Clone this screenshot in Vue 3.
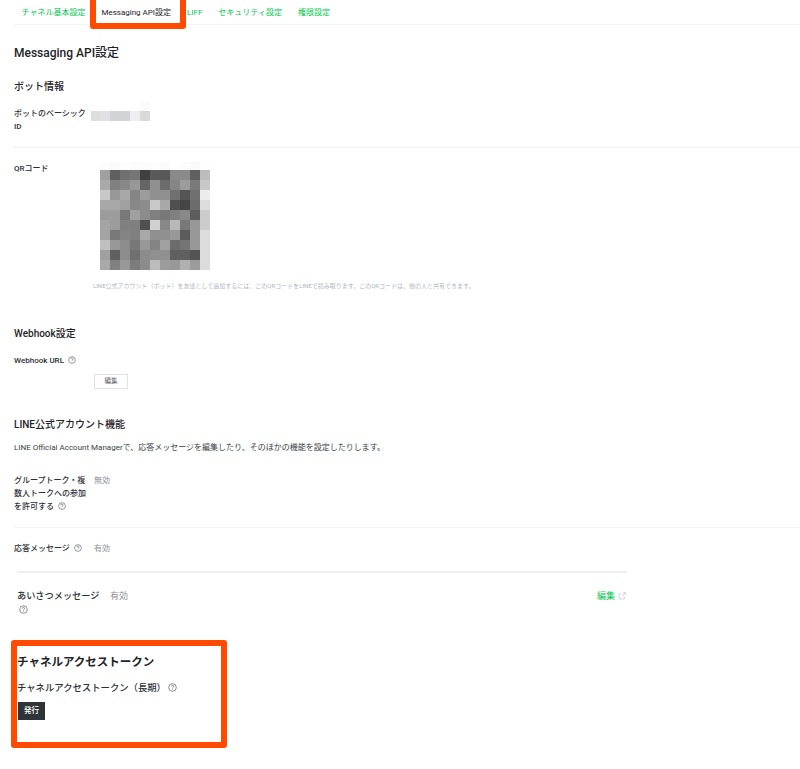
<script setup>
const tabs = ['チャネル基本設定', 'Messaging API設定', 'LIFF', 'セキュリティ設定', '権限設定']

const qrRows = [
  ['fdfdfd','fbfbfb','fdfdfd','fbfbfb','fcfcfc','fdfdfd','fbfbfb','ffffff','fcfcfc','fafafa','fefefe'],
  ['a0a0a0','5f5f5f','707070','757575','404040','5a5a5a','585858','8a8a8a','8a8a8a','606060','bcbcbc'],
  ['aaaaaa','808080','888888','989898','656565','909090','6c6c6c','858585','9c9c9c','7a7a7a','c8c8c8'],
  ['c8c8c8','989898','a8a8a8','858585','9c9c9c','909090','909090','707070','555555','707070','ececec'],
  ['a8a8a8','a8a8a8','a0a0a0','888888','8c8c8c','c8c8c8','a8a8a8','505050','454545','6c6c6c','dcdcdc'],
  ['9c9c9c','9c9c9c','787878','a0a0a0','8c8c8c','808080','787878','808080','888888','5c5c5c','cccccc'],
  ['a4a4a4','9c9c9c','808080','808080','505050','d0d0d0','888888','b8b8b8','787878','989898','cccccc'],
  ['a4a4a4','787878','848484','808080','a8a8a8','909090','909090','989898','5c5c5c','989898','dcdcdc'],
  ['c0c0c0','989898','8c8c8c','787878','989898','848484','a0a0a0','6c6c6c','747474','989898','dcdcdc'],
  ['a0a0a0','606060','8c8c8c','707070','8c8c8c','909090','909090','606060','606060','545454','dcdcdc'],
  ['a8a8a8','808080','989898','7c7c7c','8c8c8c','bcbcbc','9c9c9c','989898','b0b0b0','9c9c9c','dcdcdc'],
]
const qrCells = qrRows.flat().map((c) => '#' + c)

const idCells = [
  { w: 9, c: '#dddddd' },
  { w: 10, c: '#e1e1e2' },
  { w: 20, c: '#d1d3d6' },
  { w: 10, c: '#eeeeee' },
  { w: 10, c: '#d9d9da' },
]
</script>

<template>
  <div class="page">
    <nav class="tabs">
      <span v-for="(t, i) in tabs" :key="t" class="tab" :class="{ active: i === 1 }">{{ t }}</span>
    </nav>

    <main class="content">
      <h1 class="title">Messaging API設定</h1>

      <h2 class="heading bot">ボット情報</h2>
      <div class="row bot-row">
        <div class="label">ボットのベーシックID</div>
        <div class="id-blur">
          <span class="id-faint"></span>
          <div class="id-cells">
            <span v-for="(b, i) in idCells" :key="i" :style="{ width: b.w + 'px', background: b.c }"></span>
          </div>
        </div>
      </div>
      <div class="rule"></div>

      <div class="row qr-row">
        <div class="label">QRコード</div>
        <div class="qr-col">
          <div class="qr">
            <span v-for="(c, i) in qrCells" :key="i" :style="{ background: c }"></span>
          </div>
        </div>
      </div>
      <p class="hint">LINE公式アカウント（ボット）を友達として追加するには、このQRコードをLINEで読み取ります。このQRコードは、他の人と共有できます。</p>

      <h2 class="heading webhook">Webhook設定</h2>
      <div class="label webhook-label">
        Webhook URL
        <svg class="help" viewBox="0 0 16 16"><circle cx="8" cy="8" r="6.8" /><path d="M5.9 6.2a2.1 2.1 0 1 1 3.3 1.7c-.8.5-1.2.9-1.2 1.8" /><path d="M8 11.2v1" /></svg>
      </div>
      <button class="ghost-btn" type="button">編集</button>

      <h2 class="heading account">LINE公式アカウント機能</h2>
      <p class="desc">LINE Official Account Managerで、応答メッセージを編集したり、そのほかの機能を設定したりします。</p>

      <div class="row group-row">
        <div class="label">
          グループトーク・複数人トークへの参加を許可する
          <svg class="help" viewBox="0 0 16 16"><circle cx="8" cy="8" r="6.8" /><path d="M5.9 6.2a2.1 2.1 0 1 1 3.3 1.7c-.8.5-1.2.9-1.2 1.8" /><path d="M8 11.2v1" /></svg>
        </div>
        <div class="value">無効</div>
      </div>
      <div class="rule light"></div>

      <div class="row reply-row">
        <div class="label">
          応答メッセージ
          <svg class="help" viewBox="0 0 16 16"><circle cx="8" cy="8" r="6.8" /><path d="M5.9 6.2a2.1 2.1 0 1 1 3.3 1.7c-.8.5-1.2.9-1.2 1.8" /><path d="M8 11.2v1" /></svg>
        </div>
        <div class="value">有効</div>
      </div>

      <section class="inset">
        <div class="inset-rule"></div>
        <div class="greeting">
          <div class="greeting-label">
            あいさつメッセージ
            <svg class="help big" viewBox="0 0 16 16"><circle cx="8" cy="8" r="6.8" /><path d="M5.9 6.2a2.1 2.1 0 1 1 3.3 1.7c-.8.5-1.2.9-1.2 1.8" /><path d="M8 11.2v1" /></svg>
          </div>
          <div class="greeting-value">有効</div>
          <a class="edit-link">
            編集
            <svg class="ext" viewBox="0 0 12 12"><path d="M5 2.500H1.500v8h8V7" /><path d="M6 6l4.500-4.500M7.500 1h3.500v3.500" /></svg>
          </a>
        </div>
      </section>

      <section class="token">
        <h2 class="token-title">チャネルアクセストークン</h2>
        <div class="token-label">
          チャネルアクセストークン（長期）
          <svg class="help big" viewBox="0 0 16 16"><circle cx="8" cy="8" r="6.8" /><path d="M5.9 6.2a2.1 2.1 0 1 1 3.3 1.7c-.8.5-1.2.9-1.2 1.8" /><path d="M8 11.2v1" /></svg>
        </div>
        <button class="dark-btn" type="button">発行</button>
      </section>
    </main>

    <div class="mark mark-tab"></div>
    <div class="mark mark-token"></div>
  </div>
</template>

<style>
html, body { margin: 0; background: #fff; }
</style>

<style scoped>
.page {
  position: relative;
  width: 800px;
  height: 769px;
  overflow: hidden;
  background: #fff;
  color: #1e2329;
  font-family: Roboto, "Noto Sans CJK JP", sans-serif;
}
.tabs {
  display: flex;
  gap: 16px;
  height: 24px;
  margin-left: 14px;
  padding-left: 7.500px;
  border-bottom: 1px solid #f4f5f6;
}
.tab {
  font-size: 8px;
  line-height: 26px;
  color: #06c755;
  white-space: nowrap;
}
.tab.active { color: #1e2329; }
.content { padding-left: 14px; }
.title {
  margin: 20px 0 0;
  font-size: 12px;
  line-height: 16px;
  font-weight: 500;
}
.heading {
  margin: 0;
  font-size: 10px;
  line-height: 14px;
  font-weight: 500;
}
.heading.bot { margin-top: 19px; }
.heading.webhook { margin-top: 37px; }
.heading.account { margin-top: 29px; }
.row {
  display: grid;
  grid-template-columns: 72px 1fr;
  column-gap: 8px;
}
.label {
  font-size: 8px;
  line-height: 13px;
  font-weight: 500;
  color: #2b3037;
  overflow-wrap: anywhere;
}
.value {
  font-size: 8px;
  line-height: 13px;
  color: #8b9097;
}
.bot-row { margin-top: 13px; padding-bottom: 14px; }
.id-blur {
  display: flex;
  flex-direction: column;
  margin-left: -3px;
  margin-top: -6px;
  align-items: flex-start;
}
.id-faint {
  width: 10px;
  height: 10px;
  margin-left: 49px;
  background: #fbfbfb;
}
.id-cells { display: flex; height: 10px; }
.id-cells span { display: block; height: 10px; }
.rule { height: 1px; background: #eceef0; }
.rule.light { margin-top: 14px; background: #f4f5f6; }
.qr-row { margin-top: 14px; }
.qr-col { padding-left: 6px; }
.qr {
  display: grid;
  grid-template-columns: repeat(11, 10px);
  grid-template-rows: 8px repeat(10, 10px);
  width: 110px;
}
.hint {
  margin: 12px 0 0 79px;
  font-size: 6px;
  line-height: 8px;
  color: #b1b6bd;
  white-space: nowrap;
}
.webhook-label { margin-top: 13px; }
.help {
  display: inline-block;
  width: 8px;
  height: 8px;
  margin-left: 2px;
  vertical-align: -1px;
  fill: none;
  stroke: #555a61;
  stroke-width: 1.2;
}
.help.big { width: 9px; height: 9px; }
.ghost-btn {
  display: block;
  width: 34px;
  height: 15px;
  margin: 7px 0 0 80px;
  padding: 0;
  border: 1px solid #dfe1e4;
  background: #fff;
  color: #5b6068;
  font: 400 6.5px/13px Roboto, "Noto Sans CJK JP", sans-serif;
}
.desc {
  margin: 10px 0 0;
  font-size: 8px;
  line-height: 12px;
  color: #3a3f46;
  white-space: nowrap;
}
.group-row { margin-top: 20px; }
.reply-row { margin-top: 14px; }
.inset {
  width: 610px;
  margin-left: 3px;
}
.inset-rule {
  height: 2px;
  margin-top: 16px;
  background: #eef0f1;
}
.greeting {
  display: grid;
  grid-template-columns: 83px 1fr auto;
  column-gap: 10px;
  align-items: start;
  margin-top: 16px;
}
.greeting-label {
  font-size: 9.200px;
  line-height: 14px;
  font-weight: 500;
  color: #2b3037;
}
.greeting-label .help { display: block; margin: 2px 0 0 2px; }
.greeting-value {
  font-size: 9px;
  line-height: 14px;
  color: #8b9097;
}
.edit-link {
  font-size: 9px;
  line-height: 14px;
  color: #06c755;
  display: flex;
  align-items: center;
  gap: 3px;
  padding-right: 1px;
}
.ext {
  width: 8px;
  height: 8px;
  fill: none;
  stroke: #b9bfca;
  stroke-width: 1;
}
.token { margin: 40px 0 0 3px; }
.token-title {
  margin: 0;
  font-size: 11.500px;
  line-height: 16px;
  font-weight: 700;
}
.token-label {
  margin-top: 12px;
  font-size: 9.350px;
  line-height: 12px;
  font-weight: 500;
  color: #2b3037;
}
.token-label .help { margin-left: 0; }
.dark-btn {
  display: block;
  width: 27px;
  height: 18px;
  margin: 8px 0 0 1px;
  padding: 0;
  border: 0;
  background: #2f343b;
  color: #fff;
  font: 500 7.5px/18px Roboto, "Noto Sans CJK JP", sans-serif;
}
.mark {
  position: absolute;
  box-sizing: border-box;
  border: 6px solid #ff4a00;
  border-radius: 3px;
  pointer-events: none;
}
.mark-tab { left: 90px; top: -8px; width: 96px; height: 37px; }
.mark-token { left: 11px; top: 640px; width: 216px; height: 108px; }
</style>
